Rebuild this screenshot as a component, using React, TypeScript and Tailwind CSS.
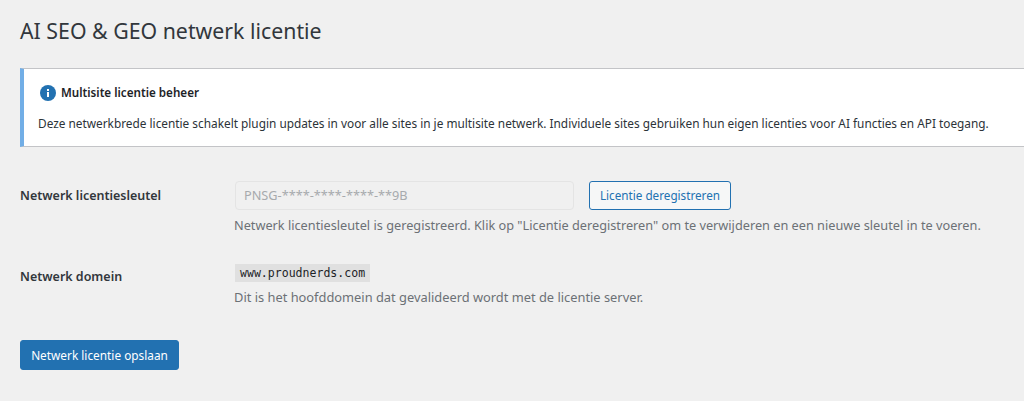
export default function App() {
  return (
    <div className="h-[401px] w-[1024px] overflow-hidden bg-[#f0f0f0] pl-5 pt-[19px] text-[12.72px] text-[#3c434a] font-['Noto_Sans',sans-serif]">
      <h1 className="text-[21.3px] leading-[24px] font-normal text-[#32373c] mb-[25px] mt-0">AI SEO &amp; GEO netwerk licentie</h1>
      <div className="bg-white border border-[#c3c4c7] border-l-4 border-l-[#72aee6] border-r-0 h-[79px] pl-[14px] pt-[14px]">
        <div className="flex items-center gap-[5px] pl-[2px] font-semibold text-[11.66px] text-[#1d2327] h-[20px]">
          <svg width="16" height="16" viewBox="0 0 16 16"><circle cx="8" cy="8" r="8" fill="#2271b1" /><rect x="7" y="7" width="2" height="5" fill="#fff" /><rect x="7" y="4" width="2" height="2" fill="#fff" /></svg>
          Multisite licentie beheer
        </div>
        <p className="mt-[11px] text-[11.83px] leading-[18px] text-[#2c3338]">Deze netwerkbrede licentie schakelt plugin updates in voor alle sites in je multisite netwerk. Individuele sites gebruiken hun eigen licenties voor AI functies en API toegang.</p>
      </div>
      <div className="flex mt-[34px]">
        <div className="w-[214px] font-semibold text-[12.47px] text-[#32373c] pt-[6px]">Netwerk licentiesleutel</div>
        <div>
          <div className="flex gap-[15px]">
            <div className="w-[339px] ml-[1px] h-[29px] bg-[#f0f0f0] border border-[#e4e4e4] rounded-[4px] px-[8px] flex items-center text-[#a7aaad]">PNSG-****-****-****-**9B</div>
            <button className="h-[29px] w-[142px] border border-[#2271b1] text-[#2271b1] rounded-[3px] bg-[#f6f7f7] text-[11.7px]">Licentie deregistreren</button>
          </div>
          <p className="mt-[6px] text-[#6c7176]">Netwerk licentiesleutel is geregistreerd. Klik op "Licentie deregistreren" om te verwijderen en een nieuwe sleutel in te voeren.</p>
        </div>
      </div>
      <div className="flex mt-[28px]">
        <div className="w-[214px] font-semibold text-[12.47px] text-[#32373c] pt-[5px]">Netwerk domein</div>
        <div>
          <code className="ml-[1px] inline-block bg-[#e0e0e0] px-[5px] text-[11.55px] leading-[18px] text-[#1d2327] font-['DejaVu_Sans_Mono',monospace]">www.proudnerds.com</code>
          <p className="mt-[6px] text-[12.85px] text-[#6c7176]">Dit is het hoofddomein dat gevalideerd wordt met de licentie server.</p>
        </div>
      </div>
      <button className="mt-[33px] h-[30px] w-[159px] rounded-[3px] bg-[#2271b1] border border-[#2271b1] text-white text-[11.83px]">Netwerk licentie opslaan</button>
    </div>
  );
}
